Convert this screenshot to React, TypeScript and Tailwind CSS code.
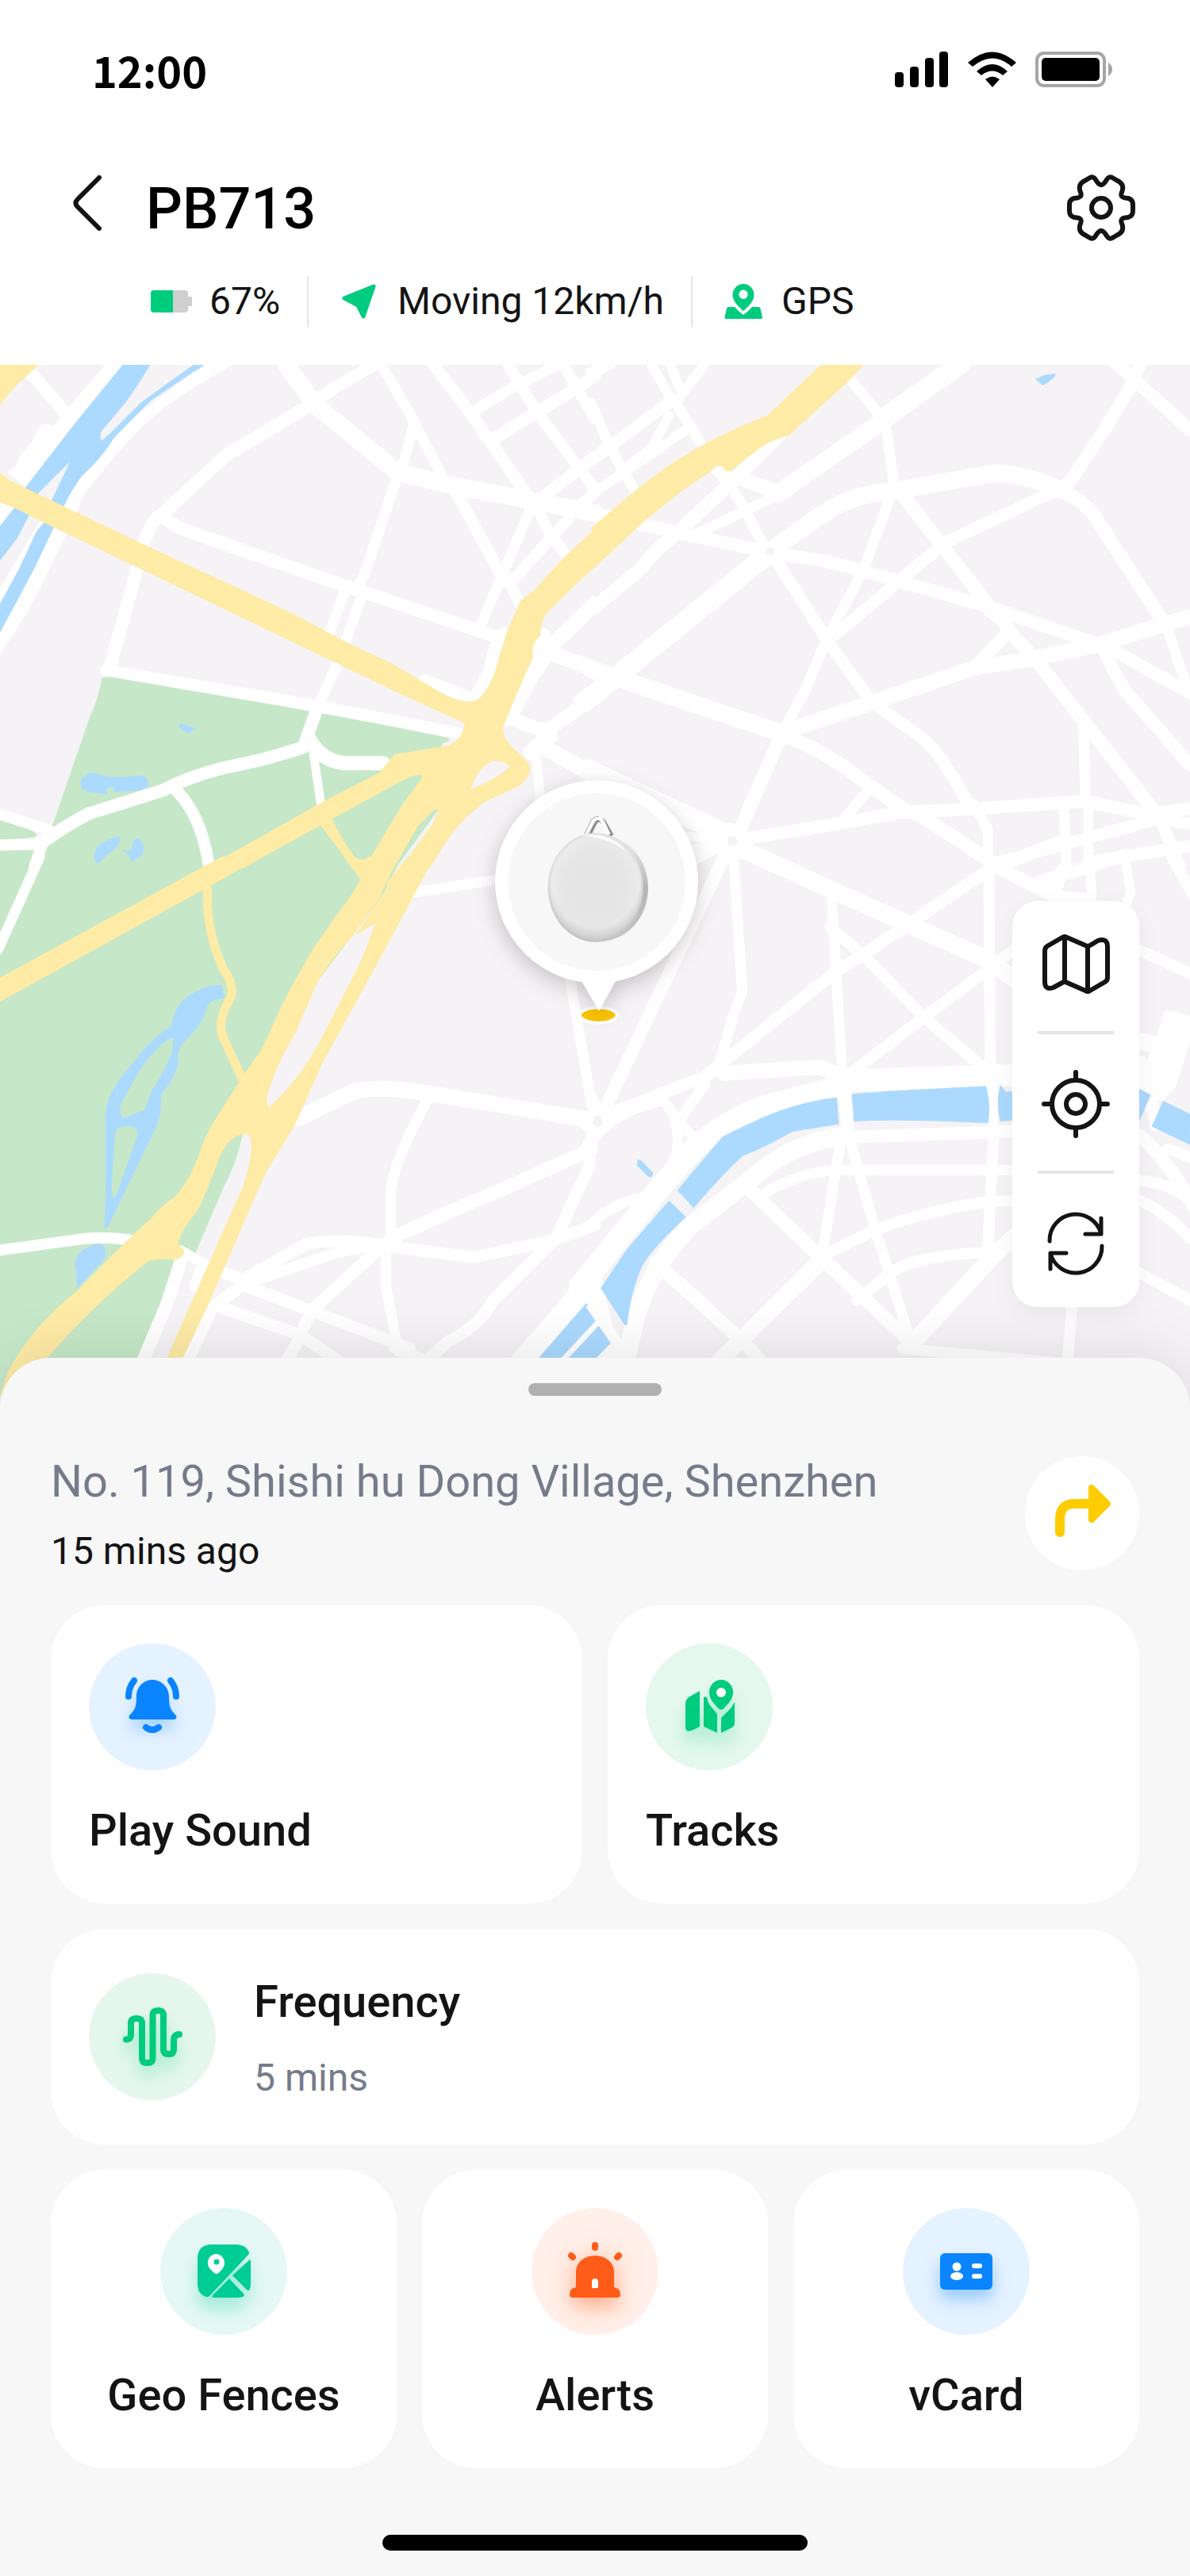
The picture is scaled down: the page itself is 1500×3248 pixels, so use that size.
import type { ReactNode } from "react";

type Tile = {
  transform: string;
  park?: string;
  banks?: string;
  roads: [number, string][];
  water: string;
  islands?: string;
  highway?: string;
  lane?: string;
  highwayPark?: string;
  highwayGap?: string;
  bridges?: [number, string][];
};

const tiles: Tile[] = [
  {
    transform: "scale(.4783 .4018)",
    park: "M268 982L310 976L540 1022L820 1088L1040 1135L1180 1170Q1192 1180 1170 1186L1110 1280L1160 1390L1030 1600H0V1425L85 1462Q105 1475 90 1483L0 1492V1520L95 1518L137 1450L235 1110Q262 1040 268 982Z",
    banks:
      "M277 0H345L70 385L17 338L40 320L50 290L85 240L105 192Q115 178 140 192L158 165L184 130ZM538 0H612L520 65Q430 130 370 200Q300 285 225 400Q205 440 205 460L175 530L110 690Q60 810 0 905V700L200 300ZM0 435L50 450L0 520Z",
    roads: [
      [16, "M62 0L172 150"],
      [22, "M755 0L830 125L1045 335L1175 375L1420 430L1568 465"],
      [15, "M830 125L845 100L985 0M1298 235L1405 155L1505 85L1568 35"],
      [13, "M1005 0L1085 165L1170 360M1090 190L1058 330M1245 148L1355 68L1470 0"],
      [15, "M1143 0L1245 160L1390 410M1195 385L1330 680M1415 430L1490 360L1568 290"],
      [14, "M1340 0L1370 60L1410 140L1530 330L1568 390M1485 0L1520 70L1568 170M1520 450L1568 400"],
      [14, "M1410 440L1450 530L1500 610M1500 480L1345 685M1330 655L1375 760"],
      [13, "M1395 460L1320 670L1262 830M1047 350L960 660L940 700M915 690L865 850M955 720L910 870M890 935L840 1070"],
      [16, "M815 128L595 285L425 470Q390 500 375 580L325 800L288 955"],
      [16, "M430 475Q460 510 510 528L900 690L1300 850"],
      [15, "M280 958L840 1072L1205 1155M1330 840Q1300 880 1290 960L1250 1050L1120 990"],
      [14, "M0 1410L130 1460M-5 1507L90 1505L135 1480M110 1510L90 1575"],
      [16, "M110 1500Q180 1440 235 1408L430 1335Q500 1290 600 1262Q700 1240 800 1200L835 1080"],
      [18, "M818 1180Q850 1245 910 1250L1010 1250"],
      [11, "M826 1220L846 1380"],
      [15, "M460 1330Q530 1410 550 1568"],
      [19, "M1568 750L1455 880L1400 980L1340 1110M1450 905L1568 955"],
      [17, "M1340 1100Q1400 1145 1445 1145L1568 1040"],
      [20, "M1400 1215L1450 1165M1425 1195L1568 1290M1430 850L1420 920"],
      [12, "M1410 1200L1425 1370"],
    ],
    water:
      "M323 0H396L365 60L330 120L270 205Q260 222 268 238L290 215L370 120Q420 75 510 0H538Q530 10 510 22L400 110Q340 180 300 230Q270 290 215 350Q190 390 170 440L140 515L90 640L50 730L0 840V750L50 640L95 525L115 495L138 420L184 305L103 400L78 470L45 545L0 615V505L40 445L70 380L125 295L200 180ZM470 1135L477 1125L520 1143L493 1156ZM215 1300Q240 1270 260 1285Q290 1300 370 1288Q390 1290 393 1320L370 1335L300 1342Q308 1325 290 1325Q275 1330 285 1348L230 1340Q205 1330 215 1300ZM250 1530Q255 1495 315 1480Q320 1510 290 1530L258 1565Q245 1560 250 1530ZM320 1523L345 1525Q350 1485 365 1485Q385 1500 375 1540L345 1562Q345 1535 320 1523Z",
    highway:
      "M0 0H102L75 30Q30 75 0 127ZM0 338L30 365L170 445L390 570L780 785L920 875L1030 935L1150 1020Q1220 1070 1255 1052Q1285 1030 1305 960L1335 840L1372 740L1410 705L1490 600L1568 515V635L1530 675L1440 780Q1420 820 1425 850Q1400 870 1405 915L1345 1080L1325 1140Q1325 1170 1350 1200L1390 1245Q1410 1280 1370 1320L1280 1370Q1220 1420 1180 1490L1132 1580H1055L1140 1440L1158 1392L1140 1400L1100 1450L1038 1580H930L880 1500L845 1445L640 1580H540L860 1365L1000 1280L1040 1222L1180 1195Q1220 1175 1225 1125L1050 1030L370 640L120 498L40 450L0 430Z",
    highwayPark:
      "M875 1425L1060 1305Q1110 1275 1113 1295L1060 1380L975 1550Q955 1560 935 1545Q900 1490 875 1425Z",
    highwayGap: "M1240 1332Q1260 1260 1300 1243Q1340 1245 1343 1262Q1310 1300 1240 1332Z",
  },
  {
    transform: "translate(750 0) scale(.4783 .4018)",
    roads: [
      [15, "M-10 25L40 -5M205 110L40 255L-10 300"],
      [12, "M148 0L205 115M198 0L225 75M288 0L215 115M195 160L150 260L85 320M245 200L80 335L-10 405"],
      [13, "M208 110L275 240M-10 120L40 260L105 395M-10 460L35 470"],
      [13, "M670 40L755 165M340 345L395 455L445 570M470 415L270 530"],
      [25, "M965 -5L765 165"],
      [22, "M765 172L620 290L480 405"],
      [17, "M490 215L380 345L215 530Q150 590 120 640L-5 765"],
      [18, "M380 355L480 400M320 320L350 360"],
      [16, "M120 500L250 535L430 580L520 600Q620 615 700 645L1040 760L1310 870"],
      [22, "M460 585L610 460Q680 405 790 395L1050 340Q1130 340 1220 390"],
      [13, "M765 180L790 390M780 410L705 650L615 850L550 1030L500 1140"],
      [17, "M805 400L910 560L1060 790M1040 770Q1080 800 1095 840L1165 930L1470 1395"],
      [13, "M1165 930L1287 1120L1293 1370M1500 800L1560 1010"],
      [15, "M470 600L615 870L730 1060L850 1160Q910 1210 985 1380"],
      [15, "M1220 390L920 560L800 680L650 830L615 860"],
      [17, "M1220 390Q1300 430 1330 500L1500 810"],
      [16, "M1420 50L1350 190L1250 370L1220 390M1360 -20L1568 205M1440 -10L1415 50"],
      [25, "M460 590L60 975L-30 1060"],
      [22, "M-10 955L490 1155"],
      [19, "M490 1155L730 1060L1000 950L1140 925L1320 880L1568 790"],
      [17, "M490 1165L385 1450L370 1500M490 1165Q580 1190 700 1300L820 1400L860 1415L1045 1560"],
      [16, "M380 1490L640 1440L800 1405L1000 1393L1290 1370L1460 1410L1568 1392"],
      [13, "M720 1335L660 1420M1000 1380L1035 1460V1560M1235 1380L1243 1568M1300 1370V1568"],
      [16, "M1080 850L1015 930M1340 890Q1380 1000 1410 1040L1568 1255M1350 885L1568 1030"],
      [15, "M1500 1420L1250 1500L1050 1565M1480 1400L1540 1568M1568 1510L1300 1560M1568 1440L1480 1425"],
      [26, "M-20 1270L330 1465"],
      [26, "M355 1470L335 1500L385 1520"],
      [12, "M340 1490L240 1480M340 1505L200 1530M350 1500L240 1568"],
    ],
    water: "M1160 45L1185 32L1213 27Q1218 40 1180 65Z",
    islands: "M348 1495a13 16 0 1 0 28 0a13 16 0 1 0 -28 0M449 585a12 11 0 1 0 25 0a12 11 0 1 0 -25 0",
    highway:
      "M595 0H708L665 55L510 222Q460 235 425 270L360 330Q345 340 340 325Q325 305 305 335L230 395L130 490L0 635L-8 640V510L100 400L160 345Q280 240 455 158L520 85Z",
  },
  {
    transform: "translate(0 620) scale(.4783 .4337)",
    park: "M0 0H1060L1010 110L860 330L640 640V810Q620 900 590 960L515 1153L465 1180L365 1457V1568H0Z",
    banks: "M1575 1165L1345 1457V1480H1640L1600 1300Z",
    roads: [
      [13, "M105 0L-5 270M548 0L552 30M475 1145L540 1185M1090 105L1320 65"],
      [14, "M-5 1145L230 1110Q290 1105 360 1118"],
      [16, "M478 1170L440 1300L375 1470"],
      [20, "M785 762L935 682Q1010 665 1140 690L1568 768"],
      [13, "M1130 700Q1030 900 1030 980V1110M1500 340L1565 760M1017 1140V1250L1050 1440"],
      [17, "M1560 850L1340 960L1200 1025L1030 1110"],
      [15, "M590 1210L640 1230L810 1125Q900 1110 1000 1130L1250 1165L1440 1120Q1530 1090 1568 1070"],
      [15, "M1553 840V900L1465 1110L1420 1160L1300 1290Q1260 1370 1180 1410L1120 1470M1000 1140L820 1320L780 1420L755 1465"],
      [14, "M650 1240L890 1150L1010 1125M1040 1430L1120 1465"],
      [15, "M560 1310L640 1245L1080 1430M580 1310L790 1390L890 1465M560 1310L495 1465M530 1200L515 1250"],
      [15, "M1535 770L1568 800L1545 850"],
    ],
    water:
      "M275 1083Q275 1060 278 1000V750Q280 700 320 640L380 560Q420 510 450 495Q460 440 485 415Q530 375 583 373L592 412Q550 415 545 440Q540 480 480 545Q465 570 470 600Q460 650 425 690Q425 760 410 790L285 1075ZM265 1125Q285 1140 275 1170L202 1258Q205 1220 197 1190Q195 1140 265 1125ZM1410 1470L1545 1298L1572 1330L1620 1403L1560 1470Z",
    highwayPark:
      "M455 528Q465 570 400 680L382 735L325 762Q310 740 320 715L375 610Q430 530 455 528ZM335 783Q365 785 363 810L305 990Q295 1000 294 960L303 810Q307 783 335 783Z",
    highway:
      "M-5 355L585 0H692L535 97L-5 425ZM905 0L950 65Q930 110 900 150L830 260Q770 370 740 440L690 560L645 630L570 760Q540 810 520 880Q495 950 460 990Q420 1020 400 1050L350 1100L200 1265Q80 1370 20 1500L0 1568H10Q50 1460 125 1457Q240 1310 380 1185Q400 1165 465 1172Q490 1160 485 1145L470 1125Q475 1090 520 1030Q540 990 580 870Q610 800 655 808Q675 840 640 960L440 1457V1470H477L550 1300L700 920L775 785L850 600L1000 300L1145 0H1075L1020 75V90L935 230L988 195Q970 260 935 340L860 500Q800 640 708 730Q700 715 705 690Q730 600 780 510L830 380Q850 330 930 230L1000 120L1052 0H972Q955 15 940 8Z",
    lane: "M547 85Q540 210 590 330Q620 375 608 410Q570 480 588 525L640 650",
    bridges: [[7, "M1478 1470L1578 1352"]],
  },
  {
    transform: "translate(750 620) scale(.4783 .4337)",
    banks:
      "M1500 450Q1520 440 1568 465V540L1530 670L1497 710L1430 690V670L1462 570L1430 560V510L1480 522Z",
    roads: [
      [16, "M345 -10L25 735"],
      [13, "M365 0L388 390L368 450L325 610M623 110L652 640"],
      [15, "M0 765L290 640L340 595L640 330L700 290L1050 30"],
      [22, "M390 -20L620 95L1035 300L1110 360"],
      [14, "M620 205L710 290L870 470L1030 620M1038 30L1042 620M680 625L870 465L1035 330L1110 265"],
      [19, "M340 630L590 612L660 640"],
      [28, "M640 652L1110 635M660 665L450 725Q340 770 260 850L170 965L-40 1250"],
      [13, "M290 660L220 770L270 830M175 705Q230 760 215 860Q190 960 130 990Q40 1010 -10 1070M-10 830Q50 740 175 710M-10 700L20 760"],
      [16, "M690 815L1110 798M655 660L668 815"],
      [23, "M665 810Q520 830 420 930L250 1075Q150 1190 110 1330L80 1470"],
      [13, "M1048 640L1050 820M430 990Q540 910 660 912H1110M648 820L600 1150M670 820L740 1090L830 1400"],
      [14, "M1050 820L1035 1150M1110 1000Q960 1000 750 1080L600 1160M690 1290L780 1210Q840 1160 1040 1150"],
      [17, "M400 960L600 1170L840 1420M160 1180L390 1410L440 1470"],
      [21, "M600 1170L380 1410L320 1475M840 1410L1050 1160L1110 1100"],
      [14, "M810 1430L1250 1475M1258 1290L1245 1470M1430 1208L1568 1290"],
      [14, "M1435 1000Q1500 1030 1568 1110M1430 940Q1520 950 1568 1000M1510 850L1580 880M1430 270L1568 340M1520 0L1575 110"],
      [17, "M1435 810Q1500 870 1580 1020M1440 600L1480 780"],
      [16, "M1010 -10L1060 30L1240 -50M1050 25L1210 115L1300 125M1170 75L1400 -5M1210 110L1230 40"],
      [12, "M1303 0L1310 130M1395 0L1412 100L1400 140"],
    ],
    water:
      "M637 700L643 778L520 800Q440 850 390 870Q340 920 260 1022L217 970L335 815Q370 795 410 775Q520 715 637 700ZM677 690L800 680L1030 667Q1045 720 1036 775Q800 762 682 770ZM1068 663L1082 683H1110V766L1068 770Q1055 720 1068 663ZM1430 672L1465 693L1435 768H1430ZM1497 710L1568 748V838L1467 785ZM195 1000L240 1048Q150 1140 125 1190Q95 1260 85 1362L78 1362L15 1255L85 1140ZM112 882Q120 880 125 887L152 918Q155 932 143 933L110 898Z",
    islands: "M-6 770a12 16 0 1 0 26 0a12 16 0 1 0 -26 0",
    bridges: [[14, "M-12 1300L75 1440"]],
  },
];

function CityMap() {
  return (
    <svg
      className="block h-full w-full"
      viewBox="0 0 1500 1328"
      preserveAspectRatio="xMidYMin slice"
      aria-hidden="true"
    >
      <rect width="1500" height="1328" fill="#f5f3f5" />
      {tiles.map((tile) => (
        <g key={tile.transform} transform={tile.transform}>
          {tile.park && <path d={tile.park} fill="#c6e8c8" />}
          {tile.banks && <path d={tile.banks} fill="#fff" />}
        </g>
      ))}
      {tiles.map((tile) => (
        <g
          key={tile.transform}
          transform={tile.transform}
          fill="none"
          stroke="#fff"
          strokeLinecap="round"
          strokeLinejoin="round"
        >
          {tile.roads.map(([width, d]) => (
            <path key={d} d={d} strokeWidth={width} vectorEffect="non-scaling-stroke" />
          ))}
        </g>
      ))}
      {tiles.map((tile) => (
        <g key={tile.transform} transform={tile.transform}>
          <path d={tile.water} fill="#acdafe" />
          {tile.islands && <path d={tile.islands} fill="#f5f3f5" />}
          {tile.highway && <path d={tile.highway} fill="#feeba6" />}
          {tile.lane && (
            <path
              d={tile.lane}
              fill="none"
              stroke="#feeba6"
              strokeWidth="11"
              vectorEffect="non-scaling-stroke"
            />
          )}
          {tile.highwayPark && <path d={tile.highwayPark} fill="#c6e8c8" />}
          {tile.highwayGap && <path d={tile.highwayGap} fill="#f5f3f5" />}
          {tile.bridges?.map(([width, d]) => (
            <path
              key={d}
              d={d}
              fill="none"
              stroke="#fff"
              strokeWidth={width}
              vectorEffect="non-scaling-stroke"
            />
          ))}
        </g>
      ))}
    </svg>
  );
}

function DeviceMarker() {
  return (
    <svg
      className="absolute top-[510px] left-1/2 h-80 w-[304px] -translate-x-1/2 overflow-visible"
      viewBox="-6 0 912 960"
      role="img"
      aria-label="PB713 location"
    >
      <defs>
        <radialGradient id="face">
          <stop offset="0" stopColor="#e4e4e4" />
          <stop offset=".7" stopColor="#e6e6e6" />
          <stop offset=".93" stopColor="#ebebeb" />
          <stop offset="1" stopColor="#dcdcdc" />
        </radialGradient>
        <radialGradient id="shade" cx=".5" cy=".4" r=".62">
          <stop offset=".75" stopColor="#b0b0b0" stopOpacity="0" />
          <stop offset="1" stopColor="#b0b0b0" stopOpacity=".75" />
        </radialGradient>
        <linearGradient id="rim" x1="0" y1="0" x2="0" y2="1">
          <stop offset="0" stopColor="#f4f4f4" />
          <stop offset=".5" stopColor="#b5b5b5" />
          <stop offset="1" stopColor="#c6c6c6" />
        </linearGradient>
      </defs>
      <ellipse cx="463" cy="930" rx="70" ry="29" fill="#fcc600" stroke="#fff" strokeWidth="12" />
      <g className="drop-shadow-[0_24px_40px_rgba(60,40,50,0.25)]" fill="#fff">
        <circle cx="456" cy="425" r="384" />
        <path d="M396 796L460 906Q465 920 470 906L531 796Z" />
      </g>
      <circle cx="456" cy="426" r="336" fill="#f7f7f7" />
      <path d="M424 250L450 198Q465 180 482 200L512 252" fill="none" stroke="#8f8f8f" strokeWidth="20" />
      <path d="M416 246L443 196Q461 172 478 196L502 248" fill="none" stroke="#fff" strokeWidth="15" />
      <path d="M410 244L436 192Q446 178 464 178" fill="none" stroke="#a5a5a5" strokeWidth="3" />
      <ellipse cx="469" cy="449" rx="182" ry="202" fill="url(#rim)" />
      <ellipse cx="452" cy="447" rx="180" ry="206" fill="url(#face)" />
      <ellipse cx="452" cy="447" rx="180" ry="206" fill="url(#shade)" />
      <path d="M400 250Q470 236 530 275Q560 295 570 312Q510 262 400 250Z" fill="#fff" fillOpacity=".8" />
    </svg>
  );
}

function StatusBar() {
  return (
    <div className="flex h-[172px] items-center justify-between pr-24 pl-29">
      <span className="pt-1 font-['Noto_Sans_CJK_SC','Noto_Sans',sans-serif] text-[54px] leading-14 font-bold text-black">
        12:00
      </span>
      <svg className="h-12 w-[280px]" viewBox="0 0 280 48" aria-hidden="true">
        <rect x="4" y="29" width="11" height="19" rx="4" />
        <rect x="23" y="22" width="11" height="26" rx="4" />
        <rect x="42" y="11" width="11" height="37" rx="4" />
        <rect x="60" y="3" width="11" height="45" rx="4" />
        <path d="M96 17Q127 -10 157 17L151 22Q127 1 102 22Z" strokeLinejoin="round" />
        <path d="M107 28Q127 10 146 28L140 33Q127 22 113 33Z" />
        <path d="M118 38Q127 31 136 38L127 48Z" />
        <rect x="183" y="5" width="85" height="41" rx="9" fill="none" stroke="#a6a6a6" strokeWidth="4" />
        <rect x="189" y="11" width="73" height="29" rx="5" />
        <path d="M273 17Q278 20 278 25.500T273 34Z" fill="#a6a6a6" />
      </svg>
    </div>
  );
}

function Gear() {
  const quarter =
    "M0 -29C3 -29 5 -32 7 -35.500C9 -39 12 -39.500 15 -37.500L21 -34C26 -31.500 28 -28 27 -23C26 -18 24 -17 26 -14.500C28 -12 31 -12.500 34 -12C38 -11 40 -8 40 -4V0";
  return (
    <svg className="size-24" viewBox="-48 -48 96 96" fill="none" stroke="#141414" strokeWidth="6" strokeLinecap="round">
      <path d={quarter} />
      <path d={quarter} transform="scale(-1 1)" />
      <path d={quarter} transform="scale(1 -1)" />
      <path d={quarter} transform="scale(-1 -1)" />
      <circle r="12" />
    </svg>
  );
}

function Stat({ icon, children }: { icon: ReactNode; children: ReactNode }) {
  return (
    <li className="flex h-16 items-center gap-4 border-l-2 border-[#e5e5e5] pr-[34px] pl-8 first:border-l-0 first:pl-0">
      <svg className="size-16" viewBox="0 0 64 64" fill="#00cc7e" aria-hidden="true">
        {icon}
      </svg>
      <span>{children}</span>
    </li>
  );
}

function Header() {
  return (
    <header>
      <StatusBar />
      <div className="mt-10 flex h-[100px] items-center gap-10 pr-16 pl-20">
        <button type="button" aria-label="Back" className="h-24 w-16">
          <svg className="h-24 w-16" viewBox="0 0 64 96" fill="none" stroke="#141414" strokeWidth="6" strokeLinecap="round">
            <path d="M45 10L18 37Q13 42 18 47L45 74" />
          </svg>
        </button>
        <h1 className="flex-1 pt-1 text-7xl leading-[84px] font-medium text-black">PB713</h1>
        <button type="button" aria-label="Settings">
          <Gear />
        </button>
      </div>
      <ul className="mt-9 flex pb-12 pl-46 text-5xl">
        <Stat
          icon={
            <>
              <path d="M34 18H49Q53 18 53 22V26H58V38H53V42Q53 46 49 46H34Z" fill="#cfcfcf" />
              <path d="M10 18H34V46H10Q6 46 6 42V22Q6 18 10 18Z" />
            </>
          }
        >
          67%
        </Stat>
        <Stat icon={<path d="M50 13L13 28L30 37L37 51Z" stroke="#00cc7e" strokeWidth="5" strokeLinejoin="round" />}>
          Moving 12km/h
        </Stat>
        <Stat
          icon={
            <>
              <path d="M32 10A13.500 13.500 0 0 1 45.500 24C45.500 32 38 38 33.500 43Q32 44.500 30.500 43C26 38 18.500 32 18.500 24A13.500 13.500 0 0 1 32 10ZM32 17.500a5.700 5.700 0 1 0 0 11.400a5.700 5.700 0 1 0 0 -11.400" fillRule="evenodd" />
              <path d="M13 39H21Q25 44 32 49Q39 44 43 39H51Q53 39 53.500 41L56 52Q56 54 54 54H10Q8 54 8.500 52L11 41Q11.500 39 13 39Z" />
            </>
          }
        >
          GPS
        </Stat>
      </ul>
    </header>
  );
}

function MapButton({ label, children }: { label: string; children: ReactNode }) {
  return (
    <button type="button" aria-label={label} className="size-24">
      <svg
        className="size-24"
        viewBox="0 0 96 96"
        fill="none"
        stroke="#141414"
        strokeWidth="6"
        strokeLinecap="round"
        strokeLinejoin="round"
      >
        {children}
      </svg>
    </button>
  );
}

function MapControls() {
  return (
    <div className="absolute top-[676px] right-16 flex w-40 flex-col items-center rounded-[32px] bg-white py-8 shadow-[0_8px_32px_rgba(0,0,0,0.06)]">
      <MapButton label="Map type">
        <path d="M9 31Q9 27 12 25L31 14Q34 12 37 14L60 24Q63 26 66 24L76 18Q88 14 88 26V65Q88 68 85 70L66 81Q63 83 60 81L37 71Q34 69 31 71L20 77Q9 81 9 70Z" />
        <path d="M34 14V70M63 25V82" />
      </MapButton>
      <div className="mt-9 mb-10 h-1 w-24 bg-[#e5e5e5]" />
      <MapButton label="Locate device">
        <circle cx="48" cy="48" r="30" />
        <circle cx="48" cy="48" r="12" />
        <path d="M48 8V17M48 79V88M8 48H17M79 48H88" />
      </MapButton>
      <div className="mt-9 mb-10 h-1 w-24 bg-[#e5e5e5]" />
      <MapButton label="Refresh">
        <path d="M15 45A33 33 0 0 1 80 36M80 16V36H60M81 51A33 33 0 0 1 16 60M16 80V60H36" strokeWidth="5" />
      </MapButton>
    </div>
  );
}

function IconCircle({ className, children }: { className: string; children: ReactNode }) {
  return (
    <span className={`block size-40 shrink-0 rounded-full ${className}`}>
      <svg className="size-40 overflow-visible" viewBox="0 0 160 160" aria-hidden="true">
        {children}
      </svg>
    </span>
  );
}

type CardProps = { label: string; icon: ReactNode; centered?: boolean };

function Card({ label, icon, centered }: CardProps) {
  return (
    <button
      type="button"
      className={`flex flex-col gap-10 rounded-[68px] bg-white px-12 pt-12 pb-14 ${centered ? "items-center" : "items-start"}`}
    >
      {icon}
      <span className="text-[56px] leading-18 font-medium whitespace-nowrap">{label}</span>
    </button>
  );
}

const bellIcon = (
  <IconCircle className="bg-[#e5f2ff]">
    <g className="drop-shadow-[0_12px_10px_rgba(10,132,255,0.3)]">
      <path
        d="M80 46C68 46 60 56 60 67C60 80 58 84 52 90C49 93 51 96 54 96H107C110 96 112 93 109 90C103 84 101 80 101 67C101 56 92 46 80 46Z"
        fill="#0a84ff"
      />
    </g>
    <path
      d="M72 106Q80 112 88 106M57 47Q50 56 50 67M103 47Q110 56 110 67"
      fill="none"
      stroke="#0a84ff"
      strokeWidth="8"
      strokeLinecap="round"
    />
  </IconCircle>
);

const tracksIcon = (
  <IconCircle className="bg-[#e5f8ee]">
    <g className="drop-shadow-[0_16px_10px_rgba(0,204,126,0.25)]" fill="#00cc7e">
      <path d="M50 77Q50 71 54 68L68 60V105L58 110Q50 113 50 105Z" />
      <path d="M73 68Q76 66 77.500 69Q78 76 85 83L90 89V113L73 105Z" />
      <path d="M112 74V101Q112 104 109 106L95 113V94L105 84Q109 80 112 74Z" />
      <path d="M95 46A15 15.500 0 0 1 110 62C110 71 103 77 98.500 82Q95 85 91.500 82C87 77 80 71 80 62A15 15.500 0 0 1 95 46Z" />
      <circle cx="95" cy="62" r="6" fill="#fff" />
    </g>
  </IconCircle>
);

const waveIcon = (
  <IconCircle className="bg-[#e5f7ed]">
    <path
      className="drop-shadow-[0_14px_10px_rgba(0,204,126,0.3)]"
      d="M47 83.500Q53 83.500 53 76V63Q53 57 60 57Q67 57 67 63V107Q67 113 73.500 113Q80.500 113 80.500 107V53Q80.500 47 87 47Q94 47 94 53V96Q94 102 100.500 102Q107 102 107 96V85Q107 77.500 114 77"
      fill="none"
      stroke="#00cc7e"
      strokeWidth="8"
      strokeLinecap="round"
    />
  </IconCircle>
);

const fenceIcon = (
  <IconCircle className="bg-[#e5f8f4]">
    <g className="drop-shadow-[0_16px_10px_rgba(0,204,150,0.3)]" fill="#00cc96">
      <path d="M65 46H96Q108 46 112 56Q112 59 110 60L64 109Q61 113 58 112Q47 109 47 95V64Q47 46 65 46Z" />
      <path d="M113 65Q114 66 114 69V95Q114 100 112 104L110 104L91 85Z" />
      <path d="M87 89L105 108Q107 110 104 112Q101 113 97 113H67Q64 112 66 110Z" />
    </g>
    <path
      d="M71 58A10.500 11 0 0 1 81 69C81 75 78 77 74.500 81Q71 85 67 81C63 77 60 75 60 69A10.500 11 0 0 1 71 58Z"
      fill="#fff"
    />
    <circle cx="71" cy="68" r="3.500" fill="#00cc96" />
  </IconCircle>
);

const alertIcon = (
  <IconCircle className="bg-[#fff0e9]">
    <g className="drop-shadow-[0_10px_14px_rgba(255,92,26,0.5)]">
      <path
        d="M56 80A24 20 0 0 1 104 80V100Q112 101 112 109Q112 113 108 113H52Q48 113 48 109Q48 101 56 100Z"
        fill="#ff5c1a"
      />
      <path
        d="M80 47V50M50 60L52 62M110 60L108 62"
        fill="none"
        stroke="#ff5c1a"
        strokeWidth="8"
        strokeLinecap="round"
      />
    </g>
    <path d="M76 101V93A4 4 0 0 1 84 93V101Z" fill="#fff" />
  </IconCircle>
);

const vcardIcon = (
  <IconCircle className="bg-[#e5f2ff]">
    <rect
      className="drop-shadow-[0_12px_10px_rgba(10,132,255,0.35)]"
      x="47"
      y="57"
      width="66"
      height="46"
      rx="6"
      fill="#0a84ff"
    />
    <circle cx="68" cy="74" r="5.500" fill="#fff" />
    <ellipse cx="68" cy="86" rx="8" ry="5" fill="#fff" />
    <path d="M90 73H97M90 86H97" stroke="#fff" strokeWidth="6" strokeLinecap="round" />
  </IconCircle>
);

function Sheet() {
  return (
    <main className="relative -mt-19 flex flex-1 flex-col rounded-t-[64px] bg-[#f7f7f7] px-16 pt-8 pb-8 shadow-[0_0_80px_rgba(0,0,0,0.12)]">
      <div className="h-4 w-42 self-center rounded-full bg-[#b0b0b0]" />

      <div className="mt-19 flex items-center justify-between">
        <div>
          <p className="text-[56px] leading-16 text-[#757b8a]">No. 119, Shishi hu Dong Village, Shenzhen</p>
          <p className="mt-8 text-5xl leading-12">15 mins ago</p>
        </div>
        <button type="button" aria-label="Directions" className="size-36 rounded-full bg-white">
          <svg className="size-36" viewBox="0 0 144 144" fill="none" strokeLinejoin="round" strokeLinecap="round">
            <path d="M44 96V80Q44 60 62 60H84" stroke="#ffcc00" strokeWidth="12" />
            <path d="M84 40L104 60L84 80Z" fill="#ffcc00" stroke="#ffcc00" strokeWidth="8" />
          </svg>
        </button>
      </div>

      <div className="mt-11 grid grid-cols-2 gap-8">
        <Card label="Play Sound" icon={bellIcon} />
        <Card label="Tracks" icon={tracksIcon} />
      </div>

      <button type="button" className="mt-8 flex items-center gap-12 rounded-[68px] bg-white px-12 py-14 text-left">
        {waveIcon}
        <span className="flex flex-col gap-8">
          <span className="text-[56px] leading-18 font-medium">Frequency</span>
          <span className="text-5xl leading-14 text-[#757b8a]">5 mins</span>
        </span>
      </button>

      <div className="mt-8 grid grid-cols-3 gap-8">
        <Card centered label="Geo Fences" icon={fenceIcon} />
        <Card centered label="Alerts" icon={alertIcon} />
        <Card centered label="vCard" icon={vcardIcon} />
      </div>

      <div className="mt-21 h-5 w-[536px] self-center rounded-full bg-black" />
    </main>
  );
}

export default function App() {
  return (
    <div className="flex min-h-screen flex-col bg-white font-[Roboto,sans-serif] text-[#141414]">
      <Header />
      <section className="relative h-[1328px] overflow-hidden" aria-label="Map">
        <CityMap />
        <DeviceMarker />
        <MapControls />
      </section>
      <Sheet />
    </div>
  );
}
